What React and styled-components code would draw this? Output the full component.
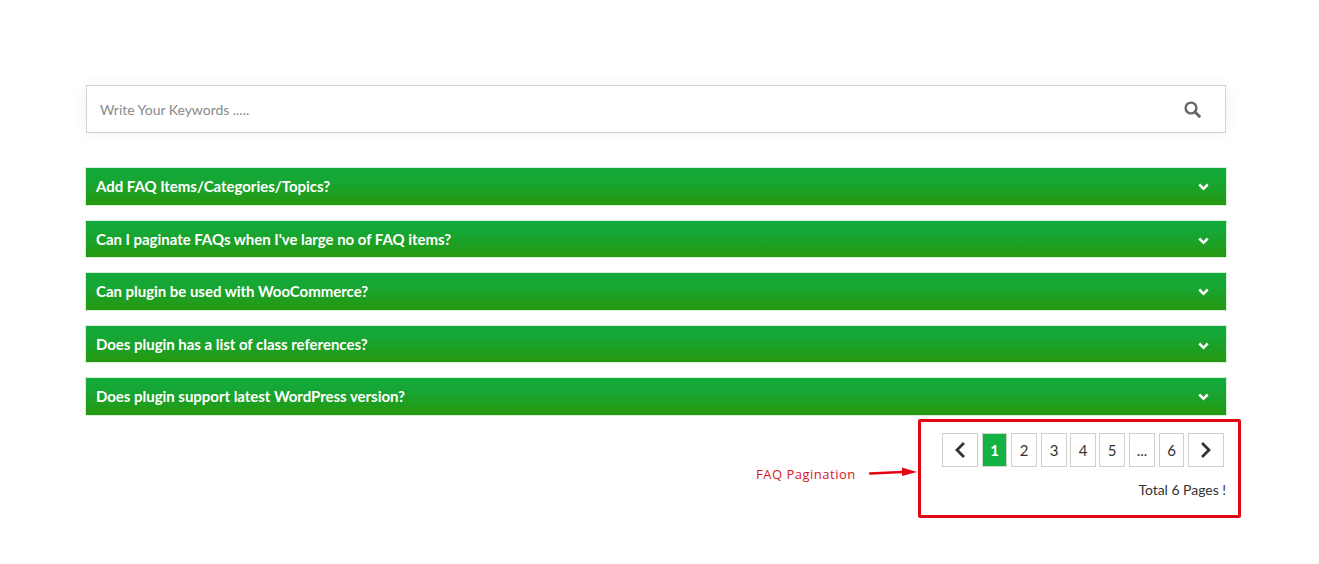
import React from 'react';
import styled, { createGlobalStyle } from 'styled-components';

const Global = createGlobalStyle`
  html, body { margin: 0; padding: 0; background: #fff; }
  body { font-family: Lato, "Open Sans", sans-serif; color: #333; }
`;
const Page = styled.div`
  position: relative;
  width: 1319px;
  height: 564px;
  box-sizing: border-box;
  padding: 85px 92px 0 86px;
  overflow: hidden;
`;
const SearchBox = styled.div`
  width: 1140px;
  height: 48px;
  box-sizing: border-box;
  display: flex;
  align-items: center;
  justify-content: space-between;
  padding: 0 24px 0 13px;
  border: 1px solid #d2d2d2;
  background: #fff;
  box-shadow: 0 0 14px rgba(0,0,0,.06);
`;
const Placeholder = styled.span`
  font-size: 14px;
  letter-spacing: -.03px;
  color: #8a8a8a;
`;
const Accordion = styled.div`
  margin-top: 34px;
  display: flex;
  flex-direction: column;
`;
const Bar = styled.div`
  width: 1142px;
  height: ${p => p.$h}px;
  margin: 0 0 ${p => p.$gap}px -1px;
  box-sizing: border-box;
  display: flex;
  align-items: center;
  justify-content: space-between;
  padding: 0 17px ${p => p.$lift}px 10px;
  background: linear-gradient(to bottom, #13ab3c 0%, #16a634 35%, #26980e 100%);
  border: 1px solid #d6efda;
  color: #fff;
  font-size: 15px;
  font-weight: 700;
  letter-spacing: -.03px;
`;
const BarIcon = styled.svg`
  margin-top: 3px;
`;
const Pagination = styled.div`
  display: flex;
  flex-direction: column;
  align-items: flex-end;
  width: 1140px;
`;
const Pages = styled.div`
  display: flex;
  margin-right: 2px;
`;
const PageBtn = styled.div`
  width: ${p => p.$w}px;
  height: 34px;
  margin-left: ${p => p.$ml}px;
  box-sizing: border-box;
  display: flex;
  align-items: center;
  justify-content: center;
  border: 1px solid ${p => (p.$active ? '#c9d6cc' : '#cfcfcf')};
  background: ${p => (p.$active ? '#13b243' : '#fff')};
  color: ${p => (p.$active ? '#fff' : '#333')};
  font-size: 15px;
  font-weight: ${p => (p.$active ? 700 : 400)};
`;
const Total = styled.div`
  margin-top: 14px;
  font-size: 14px;
  line-height: 17px;
  letter-spacing: -.03px;
  color: #333;
`;
const RedFrame = styled.div`
  position: absolute;
  left: 918px;
  top: 419px;
  width: 323px;
  height: 99px;
  box-sizing: border-box;
  border: 3px solid #e30613;
  border-radius: 2px;
`;
const Note = styled.div`
  position: absolute;
  left: 756px;
  top: 466px;
  font-family: "Open Sans", sans-serif;
  font-size: 13px;
  line-height: 16px;
  color: #d8141c;
  letter-spacing: .5px;
`;
const Arrow = styled.svg`
  position: absolute;
  left: 868px;
  top: 466px;
`;

const Chevron = ({ dir, size, sw, color }) => (
  <svg width={size} height={size} viewBox="0 0 16 16" fill="none">
    <path
      d={dir === 'left' ? 'M11 2 5 8l6 6' : 'M5 2l6 6-6 6'}
      stroke={color}
      strokeWidth={sw}
      strokeLinecap="square"
    />
  </svg>
);
const DownChevron = () => (
  <BarIcon width="11" height="8" viewBox="0 0 11 8">
    <path d="M0.4 2.4 2.2 0.6 5.5 3.9 8.8 0.6 10.6 2.4 5.5 7.5z" fill="#fff" />
  </BarIcon>
);

const items = [
  ['Add FAQ Items/Categories/Topics?', 39, 14, 2],
  ["Can I paginate FAQs when I've large no of FAQ items?", 38, 14, 0],
  ['Can plugin be used with WooCommerce?', 39, 14, 2],
  ['Does plugin has a list of class references?', 38, 14, 0],
  ['Does plugin support latest WordPress version?', 39, 17, 2],
];
const pages = [
  ['prev', 36, 0], ['1', 25, 4], ['2', 26, 4], ['3', 26, 4], ['4', 26, 3],
  ['5', 26, 3], ['...', 26, 4], ['6', 25, 4], ['next', 36, 4],
];

export default function App() {
  return (
    <Page>
      <Global />
      <SearchBox>
        <Placeholder>Write Your Keywords .....</Placeholder>
        <svg width="17" height="17" viewBox="0 0 17 17" fill="none">
          <circle cx="7" cy="7" r="5.4" stroke="#666" strokeWidth="2.4" />
          <path d="M11 11l4.3 4.3" stroke="#666" strokeWidth="3" strokeLinecap="round" />
        </svg>
      </SearchBox>
      <Accordion>
        {items.map(([t, h, g, lift]) => (
          <Bar key={t} $h={h} $gap={g} $lift={lift}>
            {t}
            <DownChevron />
          </Bar>
        ))}
      </Accordion>
      <Pagination>
        <Pages>
          {pages.map(([l, w, ml]) => (
            <PageBtn key={l} $w={w} $ml={ml} $active={l === '1'}>
              {l === 'prev' ? <Chevron dir="left" size={16} sw={2.8} color="#333" />
                : l === 'next' ? <Chevron dir="right" size={16} sw={2.8} color="#333" /> : l}
            </PageBtn>
          ))}
        </Pages>
        <Total>Total 6 Pages !</Total>
      </Pagination>
      <RedFrame />
      <Note>FAQ Pagination</Note>
      <Arrow width="50" height="12" viewBox="0 0 50 12">
        <path d="M2 7.5 34 6" stroke="#e30613" strokeWidth="2.4" strokeLinecap="round" />
        <path d="M34 1.5 49 6 34 10z" fill="#e30613" />
      </Arrow>
    </Page>
  );
}
